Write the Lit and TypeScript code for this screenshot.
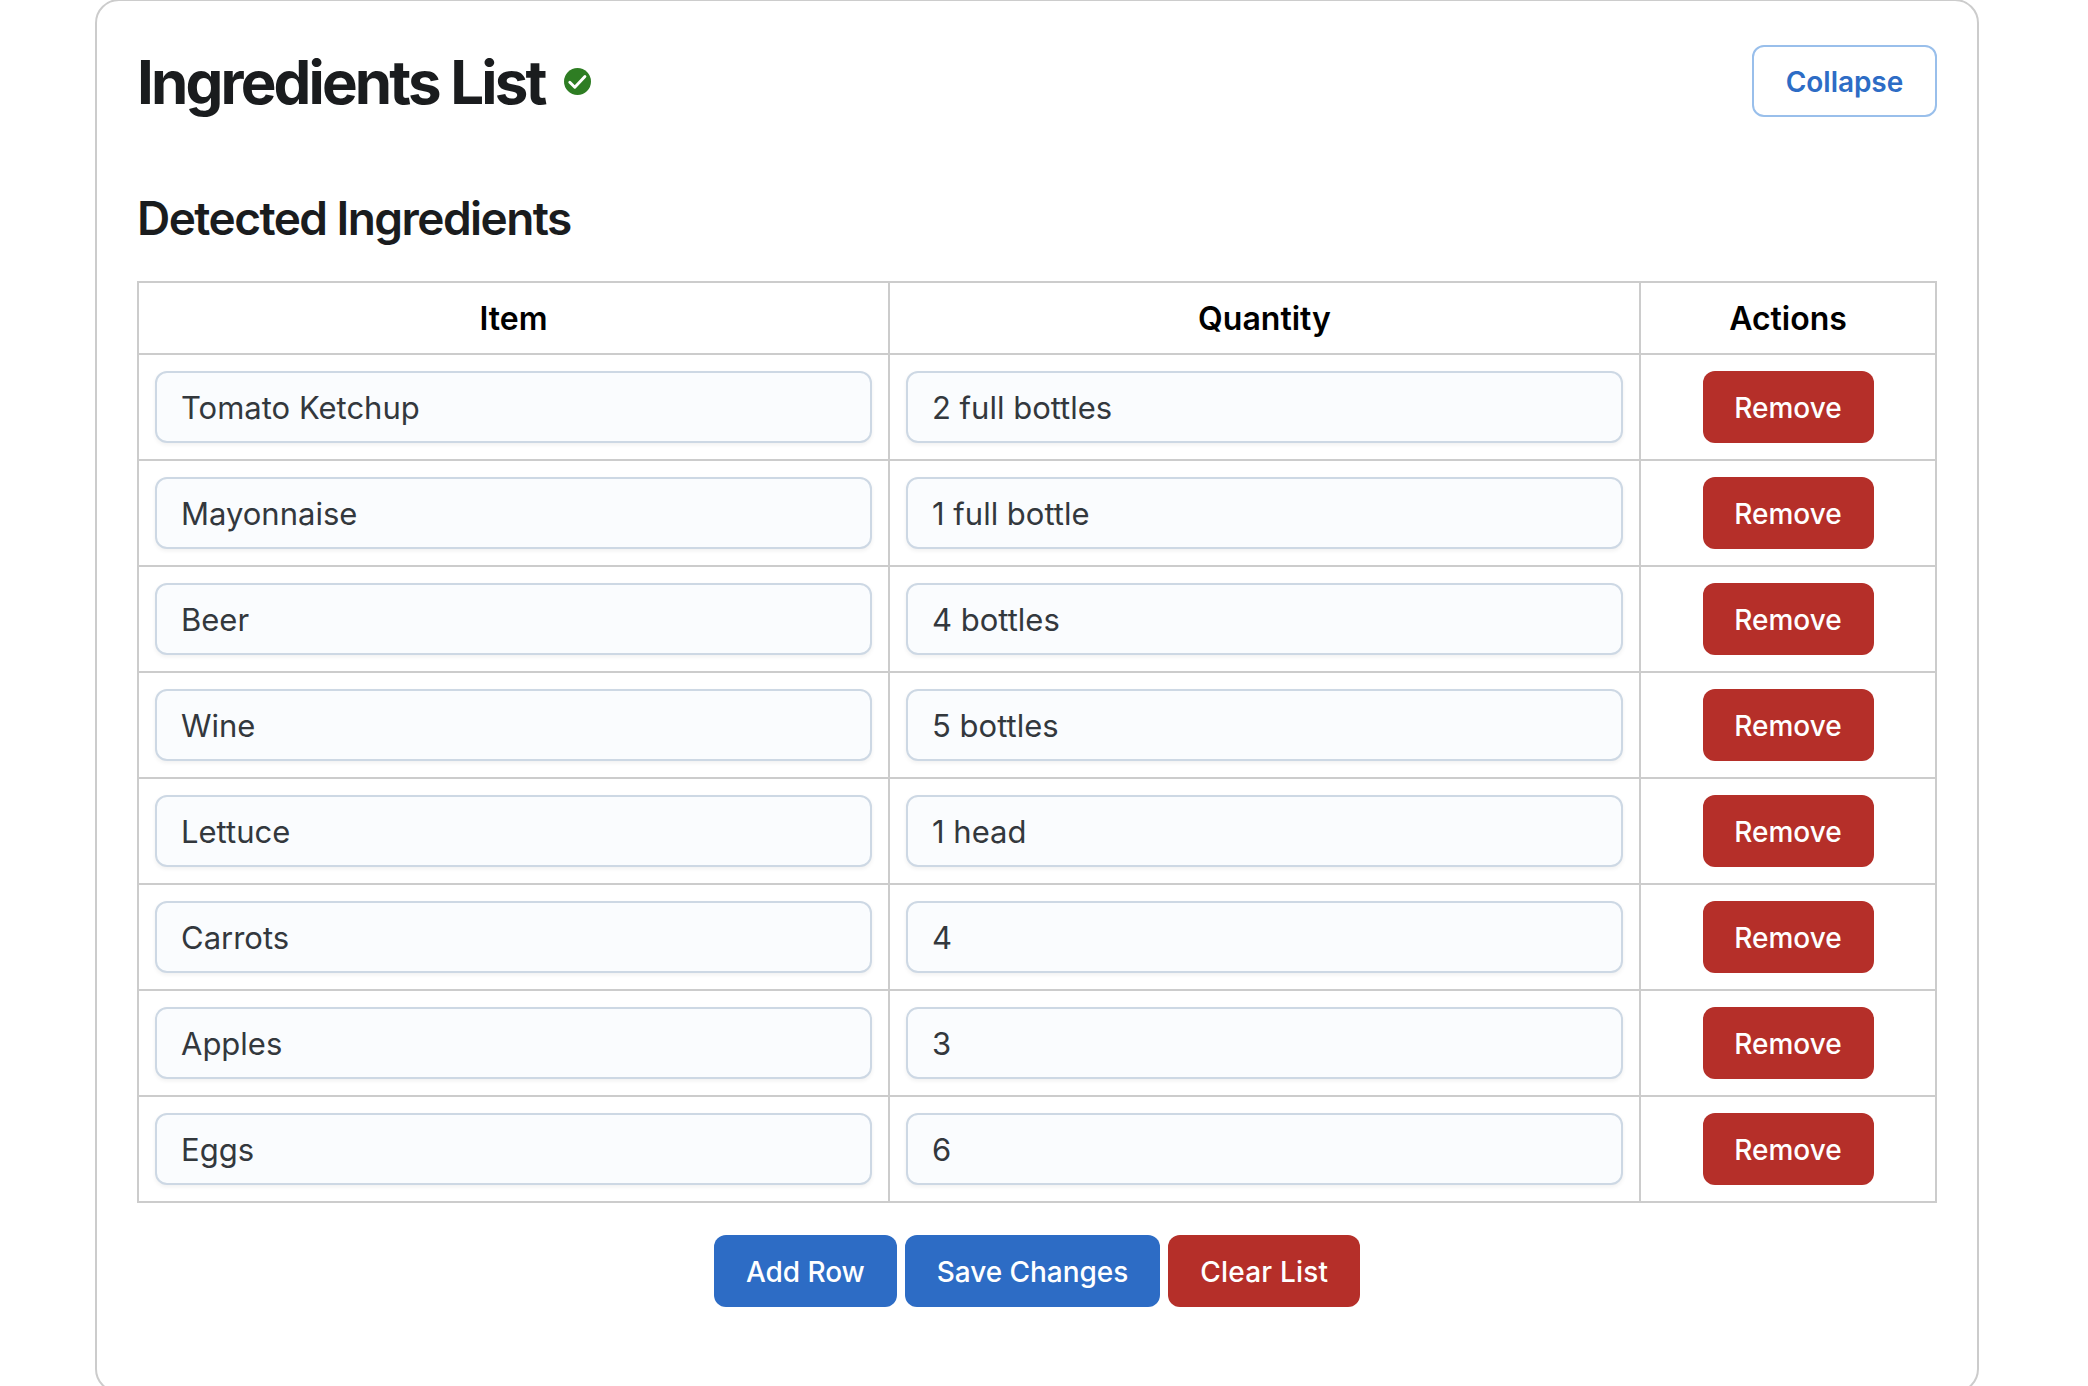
import { LitElement, html, css } from "lit";
import { customElement } from "lit/decorators.js";

const rows: [string, string][] = [
  ["Tomato Ketchup", "2 full bottles"],
  ["Mayonnaise", "1 full bottle"],
  ["Beer", "4 bottles"],
  ["Wine", "5 bottles"],
  ["Lettuce", "1 head"],
  ["Carrots", "4"],
  ["Apples", "3"],
  ["Eggs", "6"],
];

@customElement("app-root")
export class AppRoot extends LitElement {
  static styles = css`
    :host {
      display: block;
      height: 1386px;
      overflow: hidden;
      background: #fff;
      font-family: Inter, "Liberation Sans", sans-serif;
      color: #1a1c1e;
    }
    .card {
      box-sizing: border-box;
      margin: -1px 109px 0 95px;
      height: 1394px;
      border: 2px solid #cccccc;
      border-radius: 24px;
      padding: 0 40px;
    }
    .head {
      display: flex;
      justify-content: space-between;
      align-items: center;
      padding-top: 44px;
      height: 72px;
      box-sizing: content-box;
    }
    .title {
      display: flex;
      align-items: center;
      gap: 19px;
    }
    h1 {
      margin: 2px 0 0;
      font-size: 60px;
      line-height: 72px;
      font-weight: 700;
      letter-spacing: -2.85px;
    }
    .check {
      display: block;
      width: 27px;
      height: 27px;
    }
    .collapse {
      box-sizing: border-box;
      height: 72px;
      width: 185px;
      background: #fff;
      border: 2px solid #99bfeb;
      border-radius: 12px;
      color: #2d6cc5;
      font: 600 28px Inter, "Liberation Sans", sans-serif;
      letter-spacing: -0.05px;
      padding: 2px 0 0;
    }
    h2 {
      margin: 75px 0 0;
      font-size: 46px;
      line-height: 52px;
      font-weight: 600;
      letter-spacing: -1.55px;
    }
    table {
      margin-top: 37px;
      width: 100%;
      border-collapse: collapse;
      table-layout: fixed;
    }
    th,
    td {
      box-sizing: border-box;
      border: 2px solid #cccccc;
      padding: 16px;
      text-align: center;
    }
    th {
      height: 72px;
      padding: 17px 16px 15px;
      font-size: 32px;
      line-height: 38px;
      font-weight: 600;
      color: #000;
    }
    .narrow {
      width: 296px;
    }
    input {
      display: block;
      box-sizing: border-box;
      width: 100%;
      height: 72px;
      padding: 0 24px;
      border: 2px solid #cdd8e4;
      border-radius: 12px;
      background: #fafcfe;
      box-shadow: 0 2px 4px rgba(0, 0, 0, 0.06);
      color: #33383d;
      font: 400 31px Inter, "Liberation Sans", sans-serif;
      outline: none;
    }
    button {
      border: 0;
      cursor: pointer;
    }
    .remove {
      display: block;
      margin: 0 auto;
      width: 171px;
      height: 72px;
      border-radius: 12px;
      background: #b52f29;
      color: #fff;
      font: 500 28px Inter, "Liberation Sans", sans-serif;
      padding: 2px 0 0;
    }
    .actions {
      display: flex;
      justify-content: center;
      gap: 8px;
      margin-top: 32px;
    }
    .act {
      height: 72px;
      padding: 2px 32px 0;
      border-radius: 12px;
      color: #fff;
      font: 500 28px Inter, "Liberation Sans", sans-serif;
    }
    .blue {
      background: #2d6cc5;
      letter-spacing: -0.04px;
    }
    .red {
      background: #b52f29;
      letter-spacing: 0.18px;
    }
  `;

  render() {
    return html`
      <div class="card">
        <div class="head">
          <div class="title">
            <h1>Ingredients List</h1>
            <svg class="check" viewBox="0 0 28 28" aria-hidden="true">
              <circle cx="14" cy="14" r="14" fill="#2e7d23"></circle>
              <path d="M6 14.7l5.2 5.3L21.7 8.8" fill="none" stroke="#fff" stroke-width="3" stroke-linecap="round" stroke-linejoin="round"></path>
            </svg>
          </div>
          <button class="collapse">Collapse</button>
        </div>
        <h2>Detected Ingredients</h2>
        <table>
          <thead>
            <tr>
              <th>Item</th>
              <th>Quantity</th>
              <th class="narrow">Actions</th>
            </tr>
          </thead>
          <tbody>
            ${rows.map(
              ([item, qty]) => html`
                <tr>
                  <td><input value=${item} /></td>
                  <td><input value=${qty} /></td>
                  <td><button class="remove">Remove</button></td>
                </tr>
              `
            )}
          </tbody>
        </table>
        <div class="actions">
          <button class="act blue">Add Row</button>
          <button class="act blue">Save Changes</button>
          <button class="act red">Clear List</button>
        </div>
      </div>
    `;
  }
}
